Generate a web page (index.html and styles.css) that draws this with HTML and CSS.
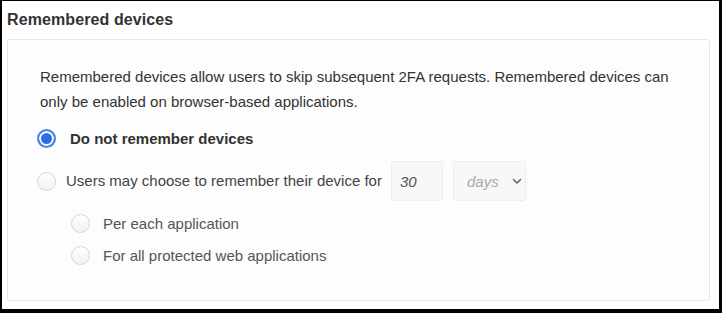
FILE: index.html
```html
<!DOCTYPE html>
<html lang="en">
<head>
  <meta charset="UTF-8">
  <title>Remembered devices</title>
  <link rel="stylesheet" href="styles.css">
</head>
<body>
  <div class="frame">
    <h2 class="section-title">Remembered devices</h2>
    <div class="card">
      <p class="card-desc">Remembered devices allow users to skip subsequent 2FA requests. Remembered devices can only be enabled on browser-based applications.</p>

      <div class="opt opt-checked">
        <span class="radio radio-on"></span>
        <span class="opt-label opt-strong">Do not remember devices</span>
      </div>

      <div class="opt opt-days">
        <span class="radio radio-off"></span>
        <span class="opt-label opt-tight">Users may choose to remember their device for</span>
        <span class="field field-num">30</span>
        <span class="field field-select">
          days
          <svg class="chev" width="10" height="7" viewBox="0 0 10 7"><path d="M1.5 1.5 L5 5 L8.5 1.5" fill="none" stroke="#666" stroke-width="1.6" stroke-linecap="round" stroke-linejoin="round"/></svg>
        </span>
      </div>

      <div class="sub">
        <div class="opt opt-sub">
          <span class="radio radio-off"></span>
          <span class="opt-label opt-light">Per each application</span>
        </div>
        <div class="opt opt-sub">
          <span class="radio radio-off"></span>
          <span class="opt-label opt-light">For all protected web applications</span>
        </div>
      </div>
    </div>
  </div>
</body>
</html>
```

FILE: styles.css
```css
* {
  margin: 0;
  padding: 0;
  box-sizing: border-box;
}

body {
  font-family: "Liberation Sans", Arial, sans-serif;
  color: #333;
  background: #fff;
}

.frame {
  width: 722px;
  height: 313px;
  border-style: solid;
  border-color: #000;
  border-width: 1px 3px 4px 2px;
  background: #fff;
  padding: 9px 0 0 5px;
}

.section-title {
  font-size: 16px;
  font-weight: bold;
  line-height: 19px;
  letter-spacing: 0.1px;
  color: #333;
}

.card {
  margin-top: 10px;
  width: 703px;
  height: 262px;
  border: 1px solid #e8e8e8;
  border-radius: 3px;
  background: #fdfdfd;
  padding: 24px 0 0 32px;
}

.card-desc {
  font-size: 15px;
  line-height: 25px;
  color: #333;
  width: 650px;
}

.opt {
  display: flex;
  align-items: center;
}

.opt-checked {
  margin-top: 12px;
  height: 25px;
}

.opt-days {
  margin-top: 10px;
  height: 40px;
}

.radio {
  flex: none;
  width: 19px;
  height: 19px;
  border-radius: 50%;
  margin-left: -3px;
}

.radio-on {
  border: 2px solid #4a86e8;
  background: #2b6fe6;
  box-shadow: inset 0 0 0 2px #fff;
}

.radio-off {
  border: 1px solid #d6d6d6;
  background: linear-gradient(#fff, #f2f2f2);
}

.opt-label {
  font-size: 15px;
  line-height: 20px;
  margin-left: 14px;
}

.opt-strong {
  font-weight: bold;
  color: #333;
}

.opt-tight {
  margin-left: 10px;
  color: #444;
}

.opt-light {
  color: #555;
  margin-left: 13px;
}

.field {
  display: flex;
  align-items: center;
  height: 40px;
  background: #f8f8f8;
  border: 1px solid #eeeeee;
  border-radius: 3px;
  font-size: 15px;
  font-style: italic;
}

.field-num {
  width: 52px;
  margin-left: 9px;
  padding-left: 8px;
  color: #555;
}

.field-select {
  width: 73px;
  margin-left: 10px;
  padding-left: 13px;
  color: #aaa;
}

.chev {
  margin-left: 13px;
}

.sub {
  padding-left: 34px;
  padding-top: 10px;
}

.opt-sub {
  height: 25px;
  margin-bottom: 7px;
}
```
